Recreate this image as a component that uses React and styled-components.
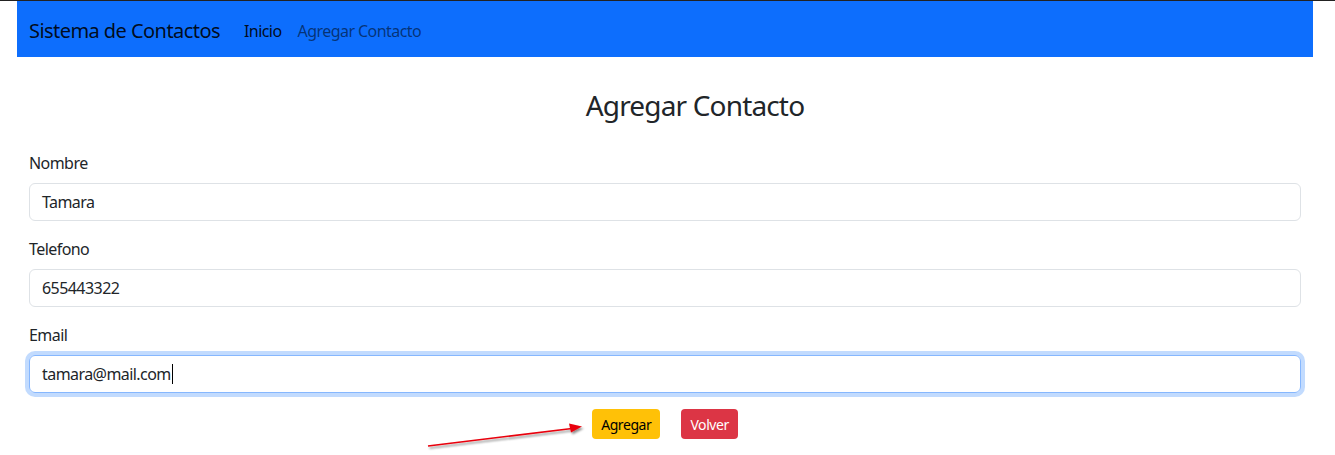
import React from "react";
import styled, { createGlobalStyle } from "styled-components";

const Global = createGlobalStyle`
  html, body { margin: 0; padding: 0; background: #fff; }
  body {
    font-family: "Noto Sans", "Open Sans", sans-serif;
    color: #212529;
    font-size: 16px;
    line-height: 1.5;
    letter-spacing: -0.035em;
    border-top: 1px solid #222;
  }
  * { box-sizing: border-box; }
`;

const Page = styled.div`
  position: relative;
  width: 1335px;
  height: 454px;
`;

const Container = styled.div`
  width: 1296px;
  margin-left: 17px;
`;

const Navbar = styled.nav`
  height: 56px;
  background: #0d6efd;
  display: flex;
  align-items: center;
  padding: 4px 12px 0;
`;

const Brand = styled.span`
  font-size: 20px;
  color: rgba(0, 0, 0, 0.9);
  margin-right: 16px;
  line-height: 30px;
`;

const NavLink = styled.a`
  padding: 8px;
  font-size: 16px;
  color: ${(p) => (p.$active ? "rgba(0,0,0,0.9)" : "rgba(0,0,0,0.55)")};
  text-decoration: none;
`;

const Main = styled.div`
  padding: 31px 12px 0;
`;

const Title = styled.h3`
  margin: 0 0 29px;
  padding-left: 60px;
  font-size: 28px;
  font-weight: 400;
  line-height: 34px;
  letter-spacing: -0.03em;
  text-align: center;
`;

const Group = styled.div`
  margin-bottom: 16px;
`;

const Label = styled.label`
  display: block;
  margin-bottom: 8px;
  line-height: 24px;
`;

const Field = styled.div`
  height: 38px;
  border: 1px solid ${(p) => (p.$focus ? "#86b7fe" : "#dee2e6")};
  border-radius: 6px;
  padding: 0 12px;
  display: flex;
  align-items: center;
  line-height: 24px;
  box-shadow: ${(p) => (p.$focus ? "0 0 0 4px rgba(13,110,253,0.25)" : "none")};
`;

const Caret = styled.span`
  display: inline-block;
  width: 1px;
  height: 20px;
  background: #000;
  margin-left: 1px;
`;

const Actions = styled.div`
  display: flex;
  justify-content: center;
  gap: 21px;
`;

const Button = styled.button`
  height: 30px;
  padding: 0 9px;
  border: none;
  border-radius: 4px;
  font-family: inherit;
  font-size: 14px;
  letter-spacing: -0.03em;
  background: ${(p) => (p.$variant === "warning" ? "#ffc107" : "#dc3545")};
  color: ${(p) => (p.$variant === "warning" ? "#000" : "#fff")};
`;

const Arrow = styled.svg`
  position: absolute;
  left: 0;
  top: 0;
  pointer-events: none;
`;

export default function App() {
  return (
    <Page>
      <Global />
      <Container>
        <Navbar>
          <Brand>Sistema de Contactos</Brand>
          <NavLink $active>Inicio</NavLink>
          <NavLink>Agregar Contacto</NavLink>
        </Navbar>
        <Main>
          <Title>Agregar Contacto</Title>
          <Group>
            <Label>Nombre</Label>
            <Field>Tamara</Field>
          </Group>
          <Group>
            <Label>Telefono</Label>
            <Field>655443322</Field>
          </Group>
          <Group>
            <Label>Email</Label>
            <Field $focus>
              tamara@mail.com
              <Caret />
            </Field>
          </Group>
          <Actions>
            <Button $variant="warning">Agregar</Button>
            <Button $variant="danger">Volver</Button>
          </Actions>
        </Main>
      </Container>
      <Arrow width="1335" height="454" viewBox="0 0 1335 454">
        <defs>
          <filter id="sh" x="-10%" y="-50%" width="120%" height="200%">
            <feDropShadow dx="1.5" dy="2" stdDeviation="1.2" floodColor="#000" floodOpacity="0.45" />
          </filter>
        </defs>
        <g filter="url(#sh)">
          <line x1="428" y1="445" x2="572" y2="427.5" stroke="#e8000b" strokeWidth="1.6" />
          <polygon points="582,425.5 569,422.5 571,431.5" fill="#e8000b" />
        </g>
      </Arrow>
    </Page>
  );
}
